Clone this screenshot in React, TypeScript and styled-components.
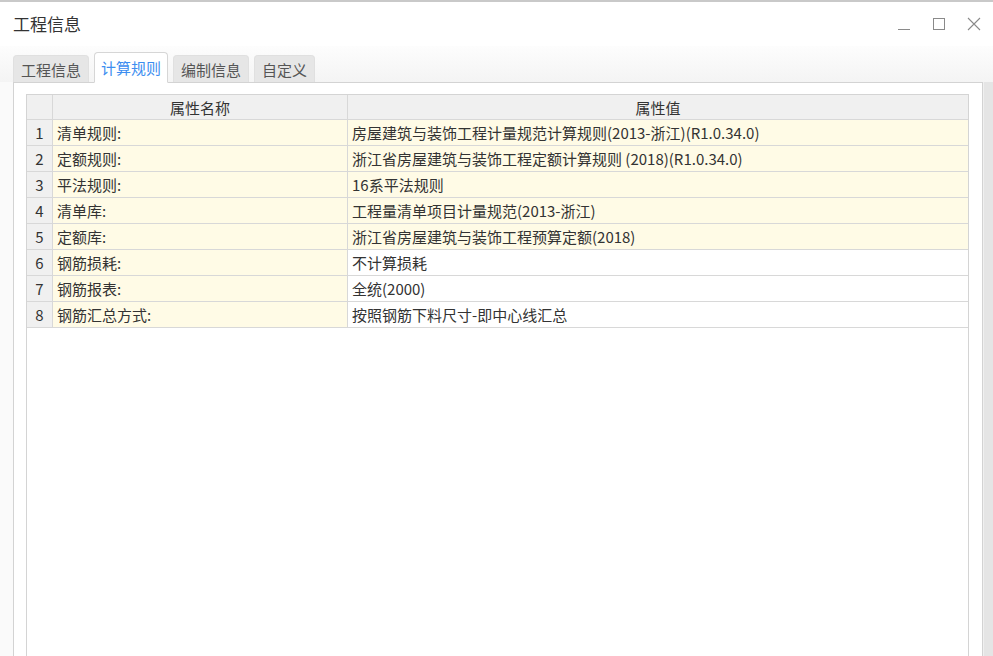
import React from 'react';
import styled, { createGlobalStyle } from 'styled-components';

const GlobalStyle = createGlobalStyle`
  html, body {
    margin: 0;
    padding: 0;
    background: #ffffff;
    font-family: "Noto Sans CJK SC", "Noto Sans", sans-serif;
    overflow: hidden;
  }
`;

const Window = styled.div`
  width: 993px;
  height: 656px;
  display: flex;
  flex-direction: column;
  border-top: 2px solid #c9c9c9;
  box-sizing: border-box;
  background: #fdfdfd;
`;

const TitleBar = styled.div`
  height: 44px;
  display: flex;
  align-items: center;
  justify-content: space-between;
  padding: 0 12px 0 13px;
  background: #ffffff;
`;

const Title = styled.div`
  font-size: 17px;
  color: #333333;
  margin-top: -2px;
`;

const Controls = styled.div`
  display: flex;
  align-items: center;
  gap: 21px;
  color: #8a8a8a;
`;

const TabBar = styled.div`
  height: 36px;
  display: flex;
  align-items: flex-end;
  gap: 5px;
  padding-left: 13px;
  background: linear-gradient(#fdfdfd, #f4f4f4);
`;

const Tab = styled.div<{ $active?: boolean }>`
  height: ${({ $active }) => ($active ? '31px' : '27px')};
  padding: 0 ${({ $active }) => ($active ? '6px' : '7px')};
  box-sizing: border-box;
  display: flex;
  align-items: center;
  font-size: 15px;
  color: ${({ $active }) => ($active ? '#3d8ef0' : '#555555')};
  background: ${({ $active }) => ($active ? '#ffffff' : '#e6e6e6')};
  border: 1px solid ${({ $active }) => ($active ? '#d6d6d6' : '#e0e0e0')};
  border-bottom: ${({ $active }) => ($active ? '1px solid #ffffff' : 'none')};
  border-radius: 4px 4px 0 0;
  margin-bottom: ${({ $active }) => ($active ? '-1px' : '0')};
  position: relative;
  z-index: ${({ $active }) => ($active ? 1 : 0)};
`;

const Body = styled.div`
  flex: 1;
  display: flex;
  background: #fafafa;
`;

const Panel = styled.div`
  margin-left: 13px;
  width: 970px;
  border: 1px solid #d3d3d3;
  border-bottom: none;
  background: #ffffff;
  padding: 11px 13px 0 12px;
  box-sizing: border-box;
  display: flex;
  flex-direction: column;
`;

const Side = styled.div`
  flex: 1;
  background: #e5e5e5;
  border-left: 1px solid #f0f0f0;
`;

const Grid = styled.div`
  flex: 1;
  border: 1px solid #d4d4d4;
  border-bottom: none;
  background: #ffffff;
`;

const Row = styled.div<{ $header?: boolean }>`
  display: grid;
  grid-template-columns: 26px 295px 1fr;
  height: ${({ $header }) => ($header ? '25px' : '26px')};
  border-bottom: 1px solid #d8d8d8;
  box-sizing: border-box;
  font-size: 15px;
  color: #333333;
`;

const Cell = styled.div<{ $bg: string; $center?: boolean }>`
  display: flex;
  align-items: center;
  justify-content: ${({ $center }) => ($center ? 'center' : 'flex-start')};
  padding-left: ${({ $center }) => ($center ? '0' : '4px')};
  background: ${({ $bg }) => $bg};
  border-right: 1px solid #d8d8d8;
  white-space: nowrap;
  overflow: hidden;
  &:last-child {
    border-right: none;
  }
`;

const CREAM = '#fffbe6';
const GRAY = '#f0f0f0';

const rows = [
  { name: '清单规则:', value: '房屋建筑与装饰工程计量规范计算规则(2013-浙江)(R1.0.34.0)', cream: true },
  { name: '定额规则:', value: '浙江省房屋建筑与装饰工程定额计算规则 (2018)(R1.0.34.0)', cream: true },
  { name: '平法规则:', value: '16系平法规则', cream: true },
  { name: '清单库:', value: '工程量清单项目计量规范(2013-浙江)', cream: true },
  { name: '定额库:', value: '浙江省房屋建筑与装饰工程预算定额(2018)', cream: true },
  { name: '钢筋损耗:', value: '不计算损耗', cream: false },
  { name: '钢筋报表:', value: '全统(2000)', cream: false },
  { name: '钢筋汇总方式:', value: '按照钢筋下料尺寸-即中心线汇总', cream: false },
];

const tabs = ['工程信息', '计算规则', '编制信息', '自定义'];

const App: React.FC = () => {
  return (
    <>
      <GlobalStyle />
      <Window>
        <TitleBar>
          <Title>工程信息</Title>
          <Controls>
            <svg width="14" height="14" viewBox="0 0 14 14">
              <line x1="1" y1="12.5" x2="13" y2="12.5" stroke="#8a8a8a" strokeWidth="1" />
            </svg>
            <svg width="14" height="14" viewBox="0 0 14 14">
              <rect x="1.5" y="1.5" width="11" height="11" fill="none" stroke="#8a8a8a" strokeWidth="1" />
            </svg>
            <svg width="14" height="14" viewBox="0 0 14 14">
              <path d="M1 1 L13 13 M13 1 L1 13" stroke="#8a8a8a" strokeWidth="1.1" />
            </svg>
          </Controls>
        </TitleBar>
        <TabBar>
          {tabs.map((t, i) => (
            <Tab key={t} $active={i === 1}>{t}</Tab>
          ))}
        </TabBar>
        <Body>
          <Panel>
            <Grid>
              <Row $header>
                <Cell $bg={GRAY} />
                <Cell $bg={GRAY} $center>属性名称</Cell>
                <Cell $bg={GRAY} $center>属性值</Cell>
              </Row>
              {rows.map((r, i) => (
                <Row key={r.name}>
                  <Cell $bg={GRAY} $center>{i + 1}</Cell>
                  <Cell $bg={CREAM}>{r.name}</Cell>
                  <Cell $bg={r.cream ? CREAM : '#ffffff'}>{r.value}</Cell>
                </Row>
              ))}
            </Grid>
          </Panel>
          <Side />
        </Body>
      </Window>
    </>
  );
};

export default App;
